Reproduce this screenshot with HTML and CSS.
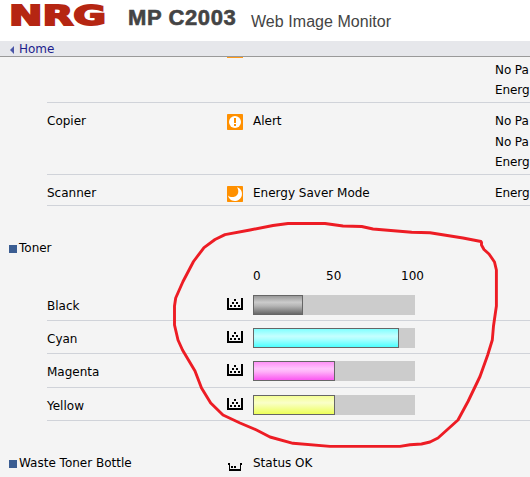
FILE: index.html
```html
<!DOCTYPE html>
<html lang="en">
<head>
<meta charset="utf-8">
<title>Web Image Monitor</title>
<link rel="stylesheet" href="styles.css">
</head>
<body>
<svg class="defs" width="0" height="0">
  <symbol id="toner" viewBox="0 0 16 12" shape-rendering="crispEdges">
    <path d="M0 0h2v10h12V0h2v12H0z"/>
    <path d="M7 1h2v2H7zM5 4h2v2H5zM9 4h2v2H9zM3 7h2v2H3zM7 7h2v2H7zM11 7h2v2h-2z"/>
  </symbol>
</svg>
<header class="masthead">
  <span class="logo">NRG</span>
  <span class="model">MP C2003</span>
  <span class="product">Web Image Monitor</span>
</header>
<nav class="nav"><span class="arrow"></span><a class="home">Home</a></nav>
<main class="content">
  <section class="functions">
    <div class="row first">
      <span></span><span class="clip"></span><span></span>
      <div class="details"><div>No Pa</div><div>Energ</div></div>
    </div>
    <div class="row copier">
      <span>Copier</span>
      <svg class="status" viewBox="0 0 16 16"><rect width="16" height="16" rx=".7" fill="#ff9000"/><circle cx="8" cy="8" r="6" fill="#fff"/><path d="M7 4h2v5H7zM7 10h2v2H7z" fill="#ff9000"/></svg>
      <span>Alert</span>
      <div class="details"><div class="tall">No Pa</div><div>No Pa</div><div>Energ</div></div>
    </div>
    <div class="row scanner">
      <span>Scanner</span>
      <svg class="status" viewBox="0 0 16 16"><rect width="16" height="16" rx=".7" fill="#ff9000"/><path d="M10 1.2C14 2.5 15.6 6 14.8 9.5C13.8 14 9 16 5 14.5C3 13.6 1.6 12 1 9.5C2.5 11 4.5 11.3 6.5 11C10 10.3 11.5 8 11.3 5C11.2 3.5 10.8 2.3 10 1.2Z" fill="#fff"/></svg>
      <span>Energy Saver Mode</span>
      <div class="details"><div>Energ</div></div>
    </div>
  </section>
  <section class="toner">
    <h2 class="heading">Toner</h2>
    <div class="scale"><span>0</span><span>50</span><span>100</span></div>
    <div class="row level"><span>Black</span><svg class="cup"><use href="#toner"/></svg><div class="bar"><div class="fill black" style="width:50px"></div></div></div>
    <div class="row level"><span>Cyan</span><svg class="cup"><use href="#toner"/></svg><div class="bar"><div class="fill cyan" style="width:146px"></div></div></div>
    <div class="row level magenta-row"><span>Magenta</span><svg class="cup"><use href="#toner"/></svg><div class="bar"><div class="fill magenta" style="width:82px"></div></div></div>
    <div class="row level"><span>Yellow</span><svg class="cup"><use href="#toner"/></svg><div class="bar"><div class="fill yellow" style="width:82px"></div></div></div>
  </section>
  <section class="waste">
    <h2 class="heading">Waste Toner Bottle</h2>
    <svg class="bottle" viewBox="0 0 14 8" shape-rendering="crispEdges"><path d="M0 0h2v6h10V0h2v2h-1v6H1V2H0zM3 3h2v2H3zM6 3h2v2H6z"/></svg>
    <span>Status OK</span>
  </section>
</main>
<svg class="marker" viewBox="0 0 530 477"><path d="M481.7 242.5L481 241.5L463 238L430 232.7L411.7 232.3L373 229L361.7 226.5L343 226L325 223.5H288L273 225.5L250 230L225 234.6L215 239.5L204 247.6L193.5 261.5L183 281.5L175.7 298L174.5 306V325L178 340L182.5 350L195 371L201.5 388L210.7 403L223 415L240 423L256.5 430L270 437L293 443.3L330 446.4H400L410 444.7L421.5 444L430 442L438 438L458 420L468 401.5L480 376.5L487.7 355L492.3 340L493.5 326L496.4 306V270L494.5 262L489 254L484 249.5L481.5 245V242"/></svg>
</body>
</html>
```
FILE: styles.css
```css
* { box-sizing: border-box; }
body {
  margin: 0;
  height: 477px;
  overflow: hidden;
  position: relative;
  background: #f4f4f4;
  color: #000;
  font: 12px/20px "DejaVu Sans", sans-serif;
  white-space: nowrap;
}
.defs { display: block; }
.masthead {
  display: flex;
  align-items: flex-start;
  height: 41px;
  background: #fff;
  color: #444;
  font-family: "Liberation Sans", Arial, sans-serif;
}
.logo {
  width: 119px;
  padding-left: 9px;
  font: bold 27px/31px "DejaVu Sans", sans-serif;
  color: #b52612;
  -webkit-text-stroke: 1.8px #b52612;
  transform: scaleX(1.48);
  transform-origin: 9px 0;
}
.model {
  width: 132px;
  padding-left: 9px;
  font-size: 22px;
  font-weight: bold;
  line-height: 36px;
  letter-spacing: .6px;
  -webkit-text-stroke: .6px #444;
}
.product { font-size: 16px; line-height: 43px; letter-spacing: .05px; }
.nav {
  display: flex;
  align-items: center;
  height: 16px;
  padding-left: 10px;
  background: #e6e7eb;
  border-bottom: 1px solid #999;
}
.arrow {
  margin: 3px 5px 0 0;
  border: solid transparent;
  border-width: 4px 4px 4px 0;
  border-right-color: #4a56a8;
}
.home { color: #1c1c8c; }
.row {
  display: grid;
  grid-template-columns: 180px 26px 242px 35px;
  align-items: start;
  margin-left: 47px;
  padding-top: 8px;
  border-bottom: 1px solid #d0d3d9;
}
.first { height: 46px; padding-top: 0; }
.first .details { padding-top: 3px; }
.clip { width: 16px; height: 1px; background: #ff9a1a; }
.copier { height: 72px; }
.scanner { height: 31px; }
.tall { height: 21px; }
.details { letter-spacing: -.1px; }
.status { width: 16px; height: 16px; margin-top: 3px; }
.toner { padding-top: 32px; }
.heading {
  display: flex;
  align-items: center;
  gap: 2px;
  margin: 0;
  padding-left: 9px;
  font-size: 12px;
  font-weight: normal;
  line-height: 20px;
}
.heading::before { content: ""; width: 8px; height: 8px; margin-top: 2px; background: #3b5d92; }
.scale {
  display: grid;
  grid-template-columns: 73px 75px auto;
  height: 22px;
  margin: 8px 0 0 253px;
}
.level { height: 33px; }
.magenta-row { height: 34px; }
.cup { width: 16px; height: 12px; margin-top: 2px; }
.bar { width: 162px; height: 20px; margin-top: -1px; background: #ccc; }
.fill { height: 20px; border: 1px solid #666; }
.black { background: linear-gradient(#999, #cbcbcb 35%, #b5b5b5 55%, #686868); }
.cyan { background: linear-gradient(#80ffff, #c5ffff 40%, #b0ffff 55%, #4dffff); }
.magenta { background: linear-gradient(#ff91f7, #ffc5fc 38%, #ffaff9 55%, #fa58f0); }
.yellow { background: linear-gradient(#f4ff95, #faffc8 38%, #f6ffab 55%, #edff58); }
.waste {
  display: grid;
  grid-template-columns: 228px 25px auto;
  align-items: start;
  padding-top: 32px;
}
.bottle { width: 14px; height: 8px; margin-top: 10px; }
.marker {
  position: absolute;
  inset: 0;
  width: 530px;
  height: 477px;
  pointer-events: none;
}
.marker path { fill: none; stroke: #ed1c24; stroke-width: 2.9; stroke-linejoin: round; }
```
